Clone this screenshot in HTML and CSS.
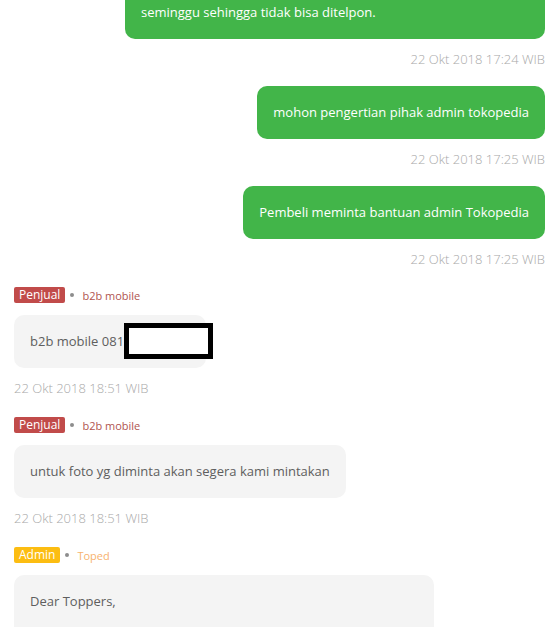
FILE: index.html
```html
<!DOCTYPE html>
<html lang="id">

<head>
    <meta charset="UTF-8">
    <meta name="viewport" content="width=device-width, initial-scale=1.0">
    <title>Diskusi Komplain</title>
    <link rel="stylesheet" href="styles.css">
</head>

<body>
    <div class="chat">
        <!-- Pesan pembeli -->
        <div class="msg msg-out">
            <div class="bubble bubble-green bubble-wide">nomor HP pembeli sedang tidak aktif karena di luar kota<br>seminggu sehingga tidak bisa ditelpon.</div>
            <div class="time">22 Okt 2018 17:24 WIB</div>
        </div>
        <div class="msg msg-out">
            <div class="bubble bubble-green">mohon pengertian pihak admin tokopedia</div>
            <div class="time">22 Okt 2018 17:25 WIB</div>
        </div>
        <div class="msg msg-out">
            <div class="bubble bubble-green">Pembeli meminta bantuan admin Tokopedia</div>
            <div class="time">22 Okt 2018 17:25 WIB</div>
        </div>

        <!-- Pesan penjual -->
        <div class="msg msg-in">
            <div class="sender">
                <span class="badge badge-penjual">Penjual</span>
                <span class="dot"></span>
                <span class="sender-name name-penjual">b2b mobile</span>
            </div>
            <div class="bubble bubble-gray">b2b mobile 081<span class="redacted"></span></div>
            <div class="time">22 Okt 2018 18:51 WIB</div>
        </div>
        <div class="msg msg-in">
            <div class="sender">
                <span class="badge badge-penjual">Penjual</span>
                <span class="dot"></span>
                <span class="sender-name name-penjual">b2b mobile</span>
            </div>
            <div class="bubble bubble-gray">untuk foto yg diminta akan segera kami mintakan</div>
            <div class="time">22 Okt 2018 18:51 WIB</div>
        </div>

        <!-- Pesan admin -->
        <div class="msg msg-in">
            <div class="sender">
                <span class="badge badge-admin">Admin</span>
                <span class="dot"></span>
                <span class="sender-name name-admin">Toped</span>
            </div>
            <div class="bubble bubble-gray bubble-wide">
                <p>Dear Toppers,</p>
            </div>
        </div>
    </div>
</body>

</html>
```

FILE: styles.css
```css
/* Reset básico */
* {
    margin: 0;
    padding: 0;
    box-sizing: border-box;
}

body {
    font-family: 'Open Sans', 'Noto Sans', sans-serif;
    font-size: 13px;
    background-color: #fff;
    overflow: hidden;
}

/* Daftar pesan (sudah di-scroll ke bawah) */
.chat {
    display: flex;
    flex-direction: column;
    padding: 0 7px 0 14px;
    margin-top: -35px;
}

.msg {
    display: flex;
    flex-direction: column;
    margin-bottom: 18px;
}

.msg-out {
    align-items: flex-end;
}

.msg-in {
    align-items: flex-start;
    margin-bottom: 20px;
}

.msg-out + .msg-in {
    margin-top: 1px;
}

/* Bubble */
.bubble {
    padding: 16px;
    line-height: 21px;
    border-radius: 10px;
}

.bubble-wide {
    width: 420px;
    padding-bottom: 32px;
}

.bubble-green {
    background-color: #42b549;
    color: #fff;
}

.bubble-green.bubble-wide {
    padding-bottom: 16px;
}

.bubble-gray {
    background-color: #f4f4f4;
    color: #5e5e5e;
    position: relative;
}

/* Nomor disensor */
.redacted {
    display: inline-block;
    width: 66px;
    height: 1px;
}

.redacted::after {
    content: "";
    box-sizing: border-box;
    position: absolute;
    left: 110px;
    top: 8px;
    width: 89px;
    height: 36px;
    background-color: #fff;
    border: 5px solid #000;
}

.time {
    margin-top: 11px;
    line-height: 18px;
    font-size: 13px;
    font-weight: 300;
    color: #a9a9a9;
}

/* Pengirim */
.sender {
    display: flex;
    align-items: center;
    height: 16px;
    margin-bottom: 12px;
    font-size: 11px;
}

.badge {
    display: inline-block;
    height: 16px;
    line-height: 16px;
    padding: 0 5px;
    border-radius: 2px;
    color: #fff;
    font-size: 12px;
}

.badge-penjual {
    background-color: #c14b4a;
}

.badge-admin {
    background-color: #fcbd12;
}

.dot {
    width: 4px;
    height: 4px;
    border-radius: 50%;
    background-color: #8d8d8d;
    margin: 0 8px 0 5px;
}

.name-penjual {
    color: #b0544f;
}

.name-admin {
    color: #f7b26e;
}
```
